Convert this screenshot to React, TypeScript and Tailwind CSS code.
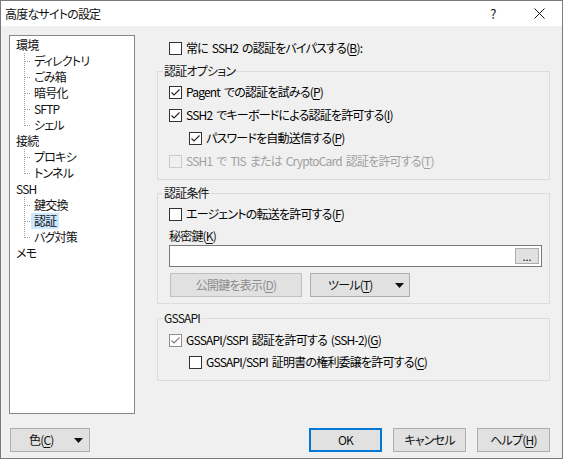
import React from 'react';

type TreeNode = { label: string; children: string[] };

const tree: TreeNode[] = [
  { label: '環境', children: ['ディレクトリ', 'ごみ箱', '暗号化', 'SFTP', 'シェル'] },
  { label: '接続', children: ['プロキシ', 'トンネル'] },
  { label: 'SSH', children: ['鍵交換', '認証', 'バグ対策'] },
  { label: 'メモ', children: [] },
];

const Acc: React.FC<{ pre: string; k: string; post?: string }> = ({ pre, k, post = ')' }) => (
  <span className="whitespace-nowrap">
    {pre}
    <u className="underline-offset-2">{k}</u>
    {post}
  </span>
);

const Check: React.FC<{ checked?: boolean; disabled?: boolean; dim?: boolean }> = ({ checked, disabled, dim }) => {
  const border = disabled ? 'border-[#cccccc]' : dim ? 'border-[#8f8f8f]' : 'border-[#333333]';
  const stroke = dim ? '#7a7a7a' : '#222222';
  return (
    <span className={`w-[13px] h-[13px] border ${border} ${disabled ? 'bg-[#f0f0f0]' : 'bg-white'} flex items-center justify-center shrink-0`}>
      {checked && (
        <svg width="11" height="11" viewBox="0 0 11 11">
          <polyline points="1.5,5.5 4,8 9.5,2.5" fill="none" stroke={stroke} strokeWidth="1.1" />
        </svg>
      )}
    </span>
  );
};

const CheckRow: React.FC<{
  checked?: boolean;
  disabled?: boolean;
  dim?: boolean;
  className?: string;
  children: React.ReactNode;
}> = ({ checked, disabled, dim, className = '', children }) => (
  <div className={`flex items-center h-[16px] gap-[4px] ${disabled ? 'text-[#a0a0a0]' : 'text-black'} ${className}`}>
    <Check checked={checked} disabled={disabled} dim={dim} />
    {children}
  </div>
);

const Group: React.FC<{ title: string; className?: string; children: React.ReactNode }> = ({ title, className = '', children }) => (
  <fieldset className={`border border-[#dcdcdc] pl-[11px] pr-[7px] ${className}`}>
    <legend className="-ml-[6px] px-[1px] leading-[16px] h-[16px]">{title}</legend>
    {children}
  </fieldset>
);

const Arrow: React.FC = () => (
  <svg width="9" height="5" viewBox="0 0 9 5">
    <polygon points="0,0 9,0 4.5,5" fill="#111111" />
  </svg>
);

const Connector: React.FC<{ last: boolean }> = ({ last }) => (
  <svg width="7" height="16" viewBox="0 0 7 16" className="shrink-0">
    <line x1="0.5" y1="0" x2="0.5" y2={last ? 9 : 16} stroke="#a0a0a0" strokeDasharray="1 1" />
    <line x1="1" y1="8.5" x2="7" y2="8.5" stroke="#a0a0a0" strokeDasharray="1 1" />
  </svg>
);

const Tree: React.FC = () => (
  <div className="w-[126px] h-full border border-[#828790] bg-white pt-[1px]">
    {tree.map((node) => (
      <div key={node.label}>
        <div className="flex h-[16px] items-center">
          <span className="ml-[3px] px-[3px] leading-[16px]">{node.label}</span>
        </div>
        {node.children.map((c, i) => (
          <div key={c} className="flex h-[16px] items-center">
            <div className="w-[14px] shrink-0" />
            <Connector last={i === node.children.length - 1} />
            <span className={`px-[3px] h-[16px] leading-[16px] ${c === '認証' ? 'bg-[#cce8ff]' : ''}`}>{c}</span>
          </div>
        ))}
      </div>
    ))}
  </div>
);

const Btn: React.FC<{ className?: string; children: React.ReactNode }> = ({ className = '', children }) => (
  <div className={`h-[24px] border border-[#adadad] bg-[#e1e1e1] flex items-center ${className}`}>{children}</div>
);

export default function App() {
  return (
    <div className="w-[563px] h-[459px] border border-[#7a7a7a] flex flex-col font-['Noto_Sans_CJK_JP',sans-serif] [font-feature-settings:'palt'] text-[12px] leading-[16px] tracking-[-0.8px] [word-spacing:2px] text-[#111111] overflow-hidden">
      {/* title bar */}
      <div className="h-[25px] bg-white flex items-center shrink-0">
        <span className="pl-[4px]">高度なサイトの設定</span>
        <div className="ml-auto w-[46px] h-full flex items-center justify-center text-[13px]">?</div>
        <div className="w-[46px] h-full flex items-center justify-center">
          <svg width="11" height="11" viewBox="0 0 11 11">
            <line x1="0.5" y1="0.5" x2="10.5" y2="10.5" stroke="#111" strokeWidth="1" />
            <line x1="10.5" y1="0.5" x2="0.5" y2="10.5" stroke="#111" strokeWidth="1" />
          </svg>
        </div>
      </div>

      {/* body */}
      <div className="flex-1 bg-[#f0f0f0] px-[8px] pt-[9px] pb-[6px] flex flex-col">
        <div className="flex h-[379px]">
          <Tree />

          <div className="ml-[22px] w-[393px] flex flex-col pt-[5px]">
            <CheckRow className="ml-[12px]">
              <Acc pre="常に SSH2 の認証をバイパスする(" k="B" post="):" />
            </CheckRow>

            <Group title="認証オプション" className="mt-[7px] pt-[5px] pb-[10px]">
              <div className="flex flex-col gap-[7px]">
                <CheckRow checked>
                  <Acc pre="Pagent での認証を試みる(" k="P" />
                </CheckRow>
                <CheckRow checked>
                  <Acc pre="SSH2 でキーボードによる認証を許可する(" k="I" />
                </CheckRow>
                <CheckRow checked className="ml-[20px]">
                  <Acc pre="パスワードを自動送信する(" k="P" />
                </CheckRow>
                <CheckRow disabled>
                  <Acc pre="SSH1 で TIS または CryptoCard 認証を許可する(" k="T" />
                </CheckRow>
              </div>
            </Group>

            <Group title="認証条件" className="mt-[5px] pt-[5px] pb-[6px]">
              <CheckRow>
                <Acc pre="エージェントの転送を許可する(" k="F" />
              </CheckRow>
              <div className="mt-[6px] h-[16px]">
                <Acc pre="秘密鍵(" k="K" />
              </div>
              <div className="mt-[1px] w-[373px] h-[22px] border border-[#7a7a7a] bg-white flex items-center justify-end pr-[2px]">
                <div className="w-[24px] h-[16px] border border-[#adadad] bg-[#e1e1e1] flex items-end justify-center text-[11px] leading-[12px] pb-[1px] tracking-normal">
                  ...
                </div>
              </div>
              <div className="mt-[6px] flex gap-[8px] ml-[1px]">
                <Btn className="w-[132px] justify-center bg-[#cccccc] border-[#bfbfbf] text-[#8c8c8c]">
                  <Acc pre="公開鍵を表示(" k="D" />
                </Btn>
                <Btn className="w-[100px] pl-[17px] pr-[5px]">
                  <Acc pre="ツール(" k="T" />
                  <span className="ml-auto flex items-center">
                    <Arrow />
                  </span>
                </Btn>
              </div>
            </Group>

            <Group title="GSSAPI" className="mt-[6px] pt-[6px] pb-[10px]">
              <CheckRow checked dim>
                <Acc pre="GSSAPI/SSPI 認証を許可する (SSH-2)(" k="G" />
              </CheckRow>
              <CheckRow className="ml-[20px] mt-[6px]">
                <Acc pre="GSSAPI/SSPI 証明書の権利委譲を許可する(" k="C" />
              </CheckRow>
            </Group>
          </div>
        </div>

        <div className="mt-[14px] flex items-center mr-[4px]">
          <Btn className="ml-[1px] w-[80px] pl-[18px] pr-[6px]">
            <span>
              色(<u className="underline-offset-2">C</u>)
            </span>
            <span className="ml-auto flex items-center">
              <Arrow />
            </span>
          </Btn>
          <div className="flex-1" />
          <div className="w-[73px] h-[24px] border-2 border-[#0078d7] bg-[#e1e1e1] flex items-center justify-center">OK</div>
          <Btn className="ml-[11px] w-[73px] justify-center">キャンセル</Btn>
          <Btn className="ml-[11px] w-[73px] justify-center">
            <Acc pre="ヘルプ(" k="H" />
          </Btn>
        </div>
      </div>
    </div>
  );
}
